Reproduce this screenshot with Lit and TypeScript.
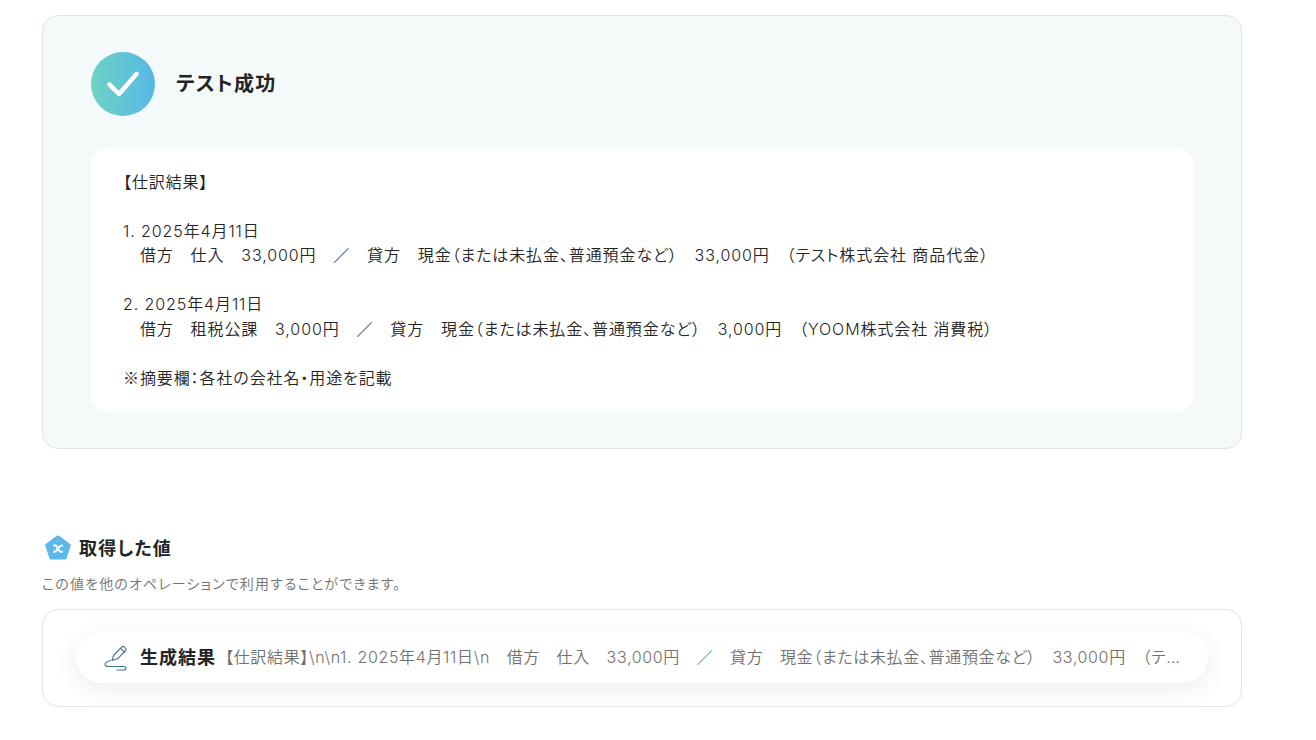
import { LitElement, html, css } from "lit";
import { customElement } from "lit/decorators.js";

const LINE_1 = `【仕訳結果】

1. 2025年4月11日
　借方　仕入　33,000円　／　貸方　現金（または未払金、普通預金など）　33,000円　（テスト株式会社 商品代金）

2. 2025年4月11日
　借方　租税公課　3,000円　／　貸方　現金（または未払金、普通預金など）　3,000円　（YOOM株式会社 消費税）

`;
const NOTE = "摘要欄：各社の会社名・用途を記載";

const VALUE = "【仕訳結果】\\n\\n1. 2025年4月11日\\n　借方　仕入　33,000円　／　貸方　現金（または未払金、普通預金など）　33,000円　（テスト株式会社 商品代金）\\n\\n2. 2025年4月11日";

@customElement("app-root")
export class AppRoot extends LitElement {
  static styles = css`
    :host {
      display: block;
      width: 1316px;
      height: 740px;
      overflow: hidden;
      background: #fff;
      font-family: Inter, "Noto Sans CJK JP", sans-serif;
      font-feature-settings: "palt";
      color: #242424;
      box-sizing: border-box;
      padding: 15px 74px 0 42px;
    }
    .success {
      box-sizing: border-box;
      height: 434px;
      border: 1px solid #dfe3e3;
      border-radius: 16px;
      background: #f4f9f9;
      padding: 36px 48px;
      display: flex;
      flex-direction: column;
      gap: 32px;
    }
    .head { display: flex; align-items: center; gap: 21px; }
    .check {
      width: 64px;
      height: 64px;
      border-radius: 50%;
      background: linear-gradient(90deg, #6dd3c3, #57b8e8);
      display: flex;
      align-items: center;
      justify-content: center;
    }
    .head h2 { margin: 0; font-size: 20px; font-weight: 700; line-height: 1.5; letter-spacing: 1.3px; }
    .result {
      background: #fff;
      border-radius: 16px;
      padding: 21.5px 32px;
      font-size: 16px;
      font-weight: 350;
      line-height: 24.5px;
      letter-spacing: 0.9px;
      white-space: pre-wrap;
      height: 264px;
      box-sizing: border-box;
    }
    .mark { font-family: "Noto Sans CJK JP", sans-serif; font-feature-settings: normal; line-height: 0; }
    .values { margin-top: 85px; }
    .title { display: flex; align-items: center; gap: 7px; padding-left: 2px; height: 28px; }
    .title span { font-size: 18px; font-weight: 700; line-height: 28px; letter-spacing: 1.2px; position: relative; top: 1px; }
    .desc { margin: 12px 0 0; font-size: 14px; font-weight: 350; line-height: 20px; letter-spacing: 1.15px; color: #707070; }
    .box {
      box-sizing: border-box;
      margin-top: 15px;
      height: 98px;
      border: 1px solid #e3e3e3;
      border-radius: 16px;
      padding: 22px 33px;
    }
    .pill {
      box-sizing: border-box;
      height: 51px;
      border-radius: 26px;
      background: #fff;
      box-shadow: 0 6px 24px rgba(0, 0, 0, 0.08);
      display: flex;
      align-items: center;
      padding: 0 28px 3px;
      gap: 6px;
    }
    .pill svg { flex: none; position: relative; top: 1.5px; }
    .name { flex: none; font-size: 18px; font-weight: 700; letter-spacing: 1px; color: #242424; margin-left: 6px; }
    .val {
      min-width: 0;
      flex: 1;
      margin-left: 3px;
      font-size: 16px;
      font-weight: 350;
      letter-spacing: 0.66px;
      color: #707070;
      white-space: nowrap;
      overflow: hidden;
      text-overflow: ellipsis;
    }
  `;

  render() {
    return html`
      <section class="success">
        <div class="head">
          <div class="check">
            <svg width="34" height="30" viewBox="0 0 34 30" fill="none">
              <path d="M3.500 15.500 L13 25 L30.500 5" stroke="#fff" stroke-width="4.500" stroke-linecap="round" stroke-linejoin="round" />
            </svg>
          </div>
          <h2>テスト成功</h2>
        </div>
        <div class="result">${LINE_1}<span class="mark">※</span>${NOTE}</div>
      </section>
      <section class="values">
        <div class="title">
          <svg width="28" height="28" viewBox="0 0 28 28">
            <path d="M12.800 1.800 Q14 1 15.200 1.800 L26.200 10 Q27 10.700 26.700 11.700 L22.500 24.500 Q22.200 25.500 21 25.500 H7 Q5.800 25.500 5.500 24.500 L1.300 11.700 Q1 10.700 1.800 10 Z" fill="#5ab9e6" />
            <path d="M10 11.500 Q11.800 11 13 13.200 L15 16.500 Q16.200 18.200 18 17.800 M18 11.500 Q16 11.500 14 14.300 Q12 18 10 17.800" fill="none" stroke="#fff" stroke-width="2.100" stroke-linecap="round" />
          </svg>
          <span>取得した値</span>
        </div>
        <p class="desc">この値を他のオペレーションで利用することができます。</p>
        <div class="box">
          <div class="pill">
            <svg width="24" height="26" viewBox="0 0 24 26" fill="none" stroke="#3f7391" stroke-width="1.100" stroke-linecap="round" stroke-linejoin="round">
              <path d="M8 15.500 L9.800 10 L18 1.800 Q19 1 20 1.800 L21.800 3.600 Q22.500 4.500 21.800 5.500 L13.500 13.800 Z" />
              <path d="M16.500 3.300 L20.300 7" />
              <path d="M6.500 15.500 Q1 17 1 19.500 Q1 21.500 5 21.500 H19.500 Q22 21.500 22 23.200 Q22 25 19.500 25 H13" />
            </svg>
            <span class="name">生成結果</span>
            <span class="val">${VALUE}</span>
          </div>
        </div>
      </section>
    `;
  }
}
